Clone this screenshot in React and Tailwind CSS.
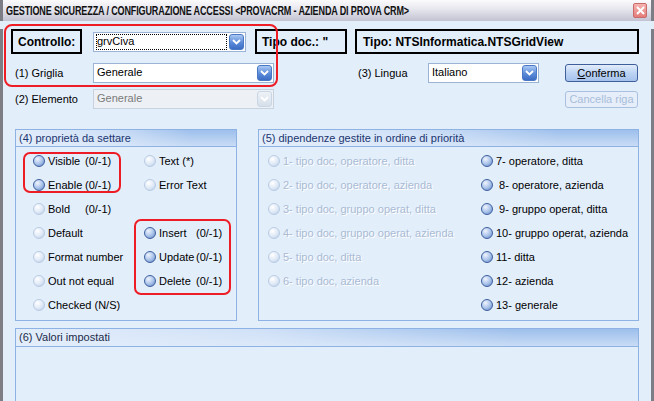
import React from 'react';

const font = { fontFamily: "'Liberation Sans', Arial, sans-serif" };

const headerBg =
    'bg-[linear-gradient(to_right,rgba(228,238,251,0.97)_0%,rgba(228,238,251,0.7)_40%,rgba(228,238,251,0)_80%),linear-gradient(#9dbfec,#c9dcf5)]';

const Chevron = ({ disabled }) => (
    <span
        className={`flex items-center justify-center w-[15px] h-[16px] rounded-[3px] border ${
            disabled
                ? 'border-[#c9d6e6] bg-[linear-gradient(#eef2f7,#d6dfea)]'
                : 'border-[#4a78c4] bg-[linear-gradient(#a9c8f3,#5a8ad8_55%,#3d6dc4)]'
        }`}
    >
        <svg width="9" height="6" viewBox="0 0 9 6">
            <path d="M1 1 L4.5 4.5 L8 1" fill="none" stroke="#ffffff" strokeWidth="1.8" />
        </svg>
    </span>
);

const Combo = ({ value, w, yellow, disabled }) => (
    <div
        className={`flex items-center h-[20px] border pl-[2px] pr-[1px] ${w} ${
            disabled ? 'border-[#c8d2de] bg-[#edf1f5] text-[#7a7a7a]' : 'border-[#9bb4d6] bg-white text-black'
        } ${yellow ? 'bg-[#ffffc4]' : ''}`}
    >
        <span
            className={`flex-1 h-[16px] leading-[15px] text-[11px] pl-[1px] ${
                yellow ? 'outline outline-1 outline-dotted outline-black -outline-offset-1 mr-[2px]' : ''
            }`}
        >
            {value}
        </span>
        <Chevron disabled={disabled} />
    </div>
);

const Radio = ({ on }) => (
    <span
        className={`inline-block shrink-0 w-[12px] h-[12px] rounded-full border ${
            on
                ? 'border-[#3d5f9f] bg-[radial-gradient(circle_at_35%_30%,#eef4fd,#a6c0e8_55%,#5a7fc0)]'
                : 'border-[#b9cbe3] bg-[radial-gradient(circle_at_35%_30%,#ffffff,#dbe6f5_60%,#aec4e4)]'
        }`}
    />
);

const Opt = ({ on, label, extra, gray }) => (
    <div className="flex items-center h-[24px]">
        <Radio on={on} />
        <span
            className={`ml-[3px] text-[11px] leading-none whitespace-pre ${
                gray ? 'text-[#a9bbd4] [text-shadow:1px_1px_0_#ffffff]' : 'text-black'
            } ${extra ? 'w-[37px] shrink-0' : ''}`}
        >
            {label}
        </span>
        {extra && <span className="text-[11px] leading-none text-black">{extra}</span>}
    </div>
);

const GroupHeader = ({ children, h = 'h-[17px]', color = 'text-[#1b3570]' }) => (
    <div className={`${h} flex items-center pl-[3px] border-b border-[#8db2e3] ${headerBg} text-[11px] ${color}`}>
        {children}
    </div>
);

export default function App() {
    return (
        <div className="relative w-[654px] h-[401px] overflow-hidden bg-[#e3eefb]" style={font}>
            {/* title bar */}
            <div className="h-[21px] flex items-center justify-between pl-[3px] pr-[4px] border-l-[3px] border-r-[3px] border-[#7d7d86] bg-[linear-gradient(#fbfbfd,#e6e6ee_45%,#c2c2d2)]">
                <span className="text-[13px] font-bold tracking-[-0.2px] text-[#111] leading-none origin-left scale-x-[0.695] whitespace-nowrap">
                    GESTIONE SICUREZZA / CONFIGURAZIONE ACCESSI &lt;PROVACRM - AZIENDA DI PROVA CRM&gt;
                </span>
                <span className="flex items-center justify-center w-[14px] h-[15px] border border-[#c86a6a] bg-[linear-gradient(#f6b4b0,#e47c78)] rounded-[2px]">
                    <svg width="9" height="9" viewBox="0 0 9 9">
                        <path d="M1 1 L8 8 M8 1 L1 8" stroke="#fff" strokeWidth="2" />
                    </svg>
                </span>
            </div>

            {/* body */}
            <div className="h-[380px] border-l-[3px] border-r-[3px] border-[#7d7d86] pl-[8px] pr-[8px] text-black">
                {/* row 1 */}
                <div className="flex items-center mt-[8px] h-[25px]">
                    <div className="w-[71px] h-[25px] border-2 border-black flex items-center pl-[5px] font-bold text-[12px]">
                        Controllo:
                    </div>
                    <div className="ml-[11px]">
                        <Combo value="grvCiva" w="w-[153px]" yellow />
                    </div>
                    <div className="ml-[9px] w-[92px] h-[25px] border-2 border-black flex items-center pl-[5px] font-bold text-[12px]">
                        Tipo doc.: "
                    </div>
                    <div className="ml-[8px] w-[284px] h-[25px] border-2 border-black flex items-center pl-[6px] font-bold text-[12px]">
                        Tipo: NTSInformatica.NTSGridView
                    </div>
                </div>

                {/* row 2 */}
                <div className="flex items-center mt-[9px] h-[20px]">
                    <span className="w-[82px] pl-[4px] text-[11px]">(1) Griglia</span>
                    <Combo value="Generale" w="w-[181px]" />
                    <span className="ml-[84px] w-[70px] text-[11px]">(3) Lingua</span>
                    <Combo value="Italiano" w="w-[111px]" />
                    <button className="ml-[26px] w-[73px] h-[18px] rounded-[3px] border border-[#3f5f9b] bg-[linear-gradient(#e3edfb,#bcd3f3_50%,#a6c2ec)] text-[11px] leading-none text-black">
                        <span className="underline">C</span>onferma
                    </button>
                </div>

                {/* row 3 */}
                <div className="flex items-center mt-[6px] h-[20px]">
                    <span className="w-[82px] pl-[4px] text-[11px]">(2) Elemento</span>
                    <Combo value="Generale" w="w-[181px]" disabled />
                    <button className="ml-[291px] w-[73px] h-[17px] rounded-[3px] border border-[#a9c0e0] bg-[#e6eefa] text-[11px] leading-none text-[#a8bdd9]">
                        Cancella riga
                    </button>
                </div>

                {/* groups 4 and 5 */}
                <div className="flex mt-[20px] pl-[4px] gap-[21px]">
                    <div className="w-[222px] h-[192px] border border-[#8db2e3]">
                        <GroupHeader>(4) proprietà da settare</GroupHeader>
                        <div className="grid grid-cols-[111px_1fr] pl-[17px] pt-[2px]">
                            <Opt on label="Visible" extra="(0/-1)" />
                            <Opt label="Text (*)" />
                            <Opt on label="Enable" extra="(0/-1)" />
                            <Opt label="Error Text" />
                            <Opt label="Bold" extra="(0/-1)" />
                            <div />
                            <Opt label="Default" />
                            <Opt on label="Insert" extra="(0/-1)" />
                            <Opt label="Format number" />
                            <Opt on label="Update" extra="(0/-1)" />
                            <Opt label="Out not equal" />
                            <Opt on label="Delete" extra="(0/-1)" />
                            <Opt label="Checked (N/S)" />
                            <div />
                        </div>
                    </div>

                    <div className="w-[381px] h-[192px] border border-[#8db2e3]">
                        <GroupHeader>(5) dipendenze gestite in ordine di priorità</GroupHeader>
                        <div className="grid grid-cols-[213px_1fr] pl-[9px] pt-[2px] grid-flow-col grid-rows-[repeat(7,24px)]">
                            <Opt gray label="1- tipo doc, operatore, ditta" />
                            <Opt gray label="2- tipo doc, operatore, azienda" />
                            <Opt gray label="3- tipo doc, gruppo operat, ditta" />
                            <Opt gray label="4- tipo doc, gruppo operat, azienda" />
                            <Opt gray label="5- tipo doc, ditta" />
                            <Opt gray label="6- tipo doc, azienda" />
                            <div />
                            <Opt on label="7- operatore, ditta" />
                            <Opt on label=" 8- operatore, azienda" />
                            <Opt on label=" 9- gruppo operat, ditta" />
                            <Opt on label="10- gruppo operat, azienda" />
                            <Opt on label="11- ditta" />
                            <Opt on label="12- azienda" />
                            <Opt on label="13- generale" />
                        </div>
                    </div>
                </div>

                {/* group 6 */}
                <div className="mt-[7px] ml-[4px] w-[624px] h-[90px] border border-[#8db2e3]">
                    <GroupHeader h="h-[18px]" color="text-[#1b2a4a]">(6) Valori impostati</GroupHeader>
                </div>
            </div>

            {/* red annotations */}
            <div className="absolute left-[4px] top-[24px] w-[274px] h-[63px] border-2 border-[#ee1c24] rounded-[8px]" />
            <div className="absolute left-[23px] top-[152px] w-[98px] h-[41px] border-2 border-[#ee1c24] rounded-[7px]" />
            <div className="absolute left-[134px] top-[219px] w-[97px] h-[76px] border-2 border-[#ee1c24] rounded-[7px]" />
        </div>
    );
}
